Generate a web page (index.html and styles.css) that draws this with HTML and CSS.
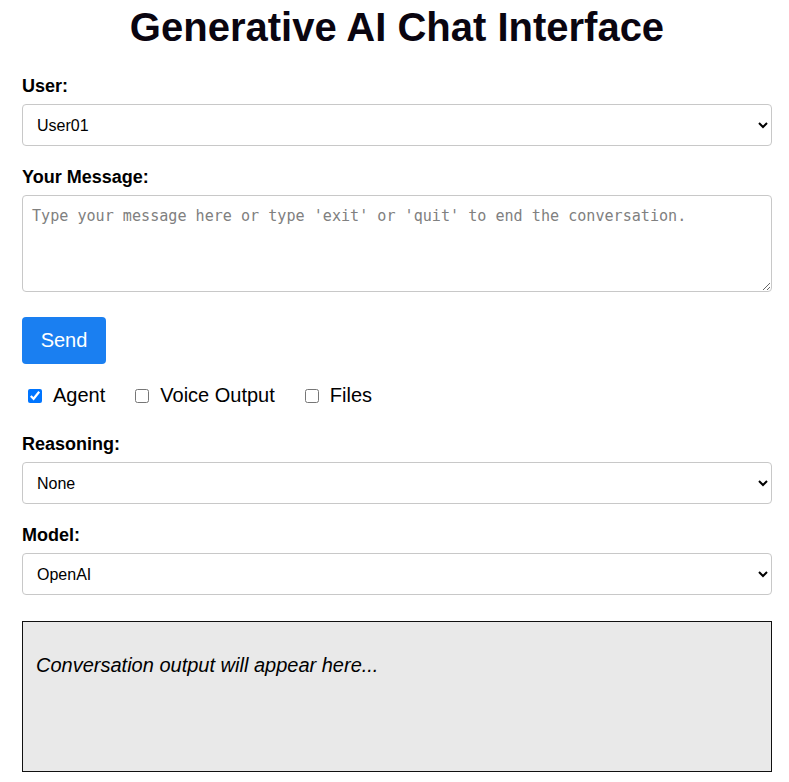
FILE: index.html
```html
<!DOCTYPE html>
<html lang="en">
<head>
<meta charset="utf-8">
<title>Generative AI Chat Interface</title>
<link rel="stylesheet" href="styles.css">
</head>
<body>
<main class="page">
  <h1 class="title">Generative AI Chat Interface</h1>

  <div class="field">
    <label class="field-label" for="user">User:</label>
    <select id="user" class="control select">
      <option>User01</option>
      <option>User02</option>
    </select>
  </div>

  <div class="field">
    <label class="field-label" for="msg">Your Message:</label>
    <textarea id="msg" class="control textarea" placeholder="Type your message here or type 'exit' or 'quit' to end the conversation."></textarea>
  </div>

  <button class="send" type="button">Send</button>

  <div class="options">
    <label class="option"><input type="checkbox" class="check" checked>Agent</label>
    <label class="option"><input type="checkbox" class="check">Voice Output</label>
    <label class="option"><input type="checkbox" class="check">Files</label>
  </div>

  <div class="field">
    <label class="field-label" for="reasoning">Reasoning:</label>
    <select id="reasoning" class="control select">
      <option>None</option>
      <option>Low</option>
      <option>High</option>
    </select>
  </div>

  <div class="field">
    <label class="field-label" for="model">Model:</label>
    <select id="model" class="control select">
      <option>OpenAI</option>
      <option>Anthropic</option>
    </select>
  </div>

  <div class="output">
    <p class="output-text">Conversation output will appear here...</p>
  </div>
</main>
</body>
</html>
```

FILE: styles.css
```css
* {
  box-sizing: border-box;
}

html, body {
  margin: 0;
  padding: 0;
  background: #ffffff;
}

body {
  font-family: "Liberation Sans", Arial, sans-serif;
  color: #000;
}

.page {
  width: 750px;
  margin-left: 22px;
  display: flex;
  flex-direction: column;
}

.title {
  margin: 4px 0 0;
  font-size: 40px;
  font-weight: bold;
  line-height: 46px;
  text-align: center;
  color: #0a0510;
}

.field {
  display: flex;
  flex-direction: column;
  margin-top: 18px;
}

.page > .field:nth-of-type(1) {
  margin-top: 23px;
}

.field-label {
  font-size: 18px;
  font-weight: bold;
  line-height: 21px;
  padding-top: 3px;
  margin-bottom: 7px;
}

.control {
  width: 750px;
  border: 1px solid #c8c8c8;
  border-radius: 4px;
  background: #fff;
  font-family: "Liberation Sans", Arial, sans-serif;
  font-size: 16px;
  color: #000;
}

.select {
  height: 42px;
  padding: 0 10px;
}

.textarea {
  height: 97px;
  padding: 11px 9px;
  font-family: "DejaVu Sans Mono", "Liberation Mono", monospace;
  font-size: 15.1px;
  resize: vertical;
}

.textarea::placeholder {
  color: #808080;
}

.send {
  align-self: flex-start;
  margin-top: 25px;
  width: 84px;
  height: 47px;
  border: none;
  border-radius: 4px;
  background: #1a7ff1;
  color: #fff;
  font-family: "Liberation Sans", Arial, sans-serif;
  font-size: 20px;
  padding: 0;
}

.options {
  display: flex;
  align-items: center;
  gap: 24px;
  margin-top: 20px;
  height: 23px;
}

.option {
  display: flex;
  align-items: center;
  font-size: 20px;
  line-height: 23px;
}

.check {
  width: 14px;
  height: 14px;
  margin: 0 11px 0 6px;
}

.page > .options + .field {
  margin-top: 24px;
}

.output {
  margin-top: 26px;
  height: 151px;
  border: 1px solid #111;
  background: #e9e9e9;
  padding: 32px 13px 30px;
}

.output-text {
  margin: 0;
  font-size: 20px;
  font-style: italic;
  line-height: 23px;
}
```
